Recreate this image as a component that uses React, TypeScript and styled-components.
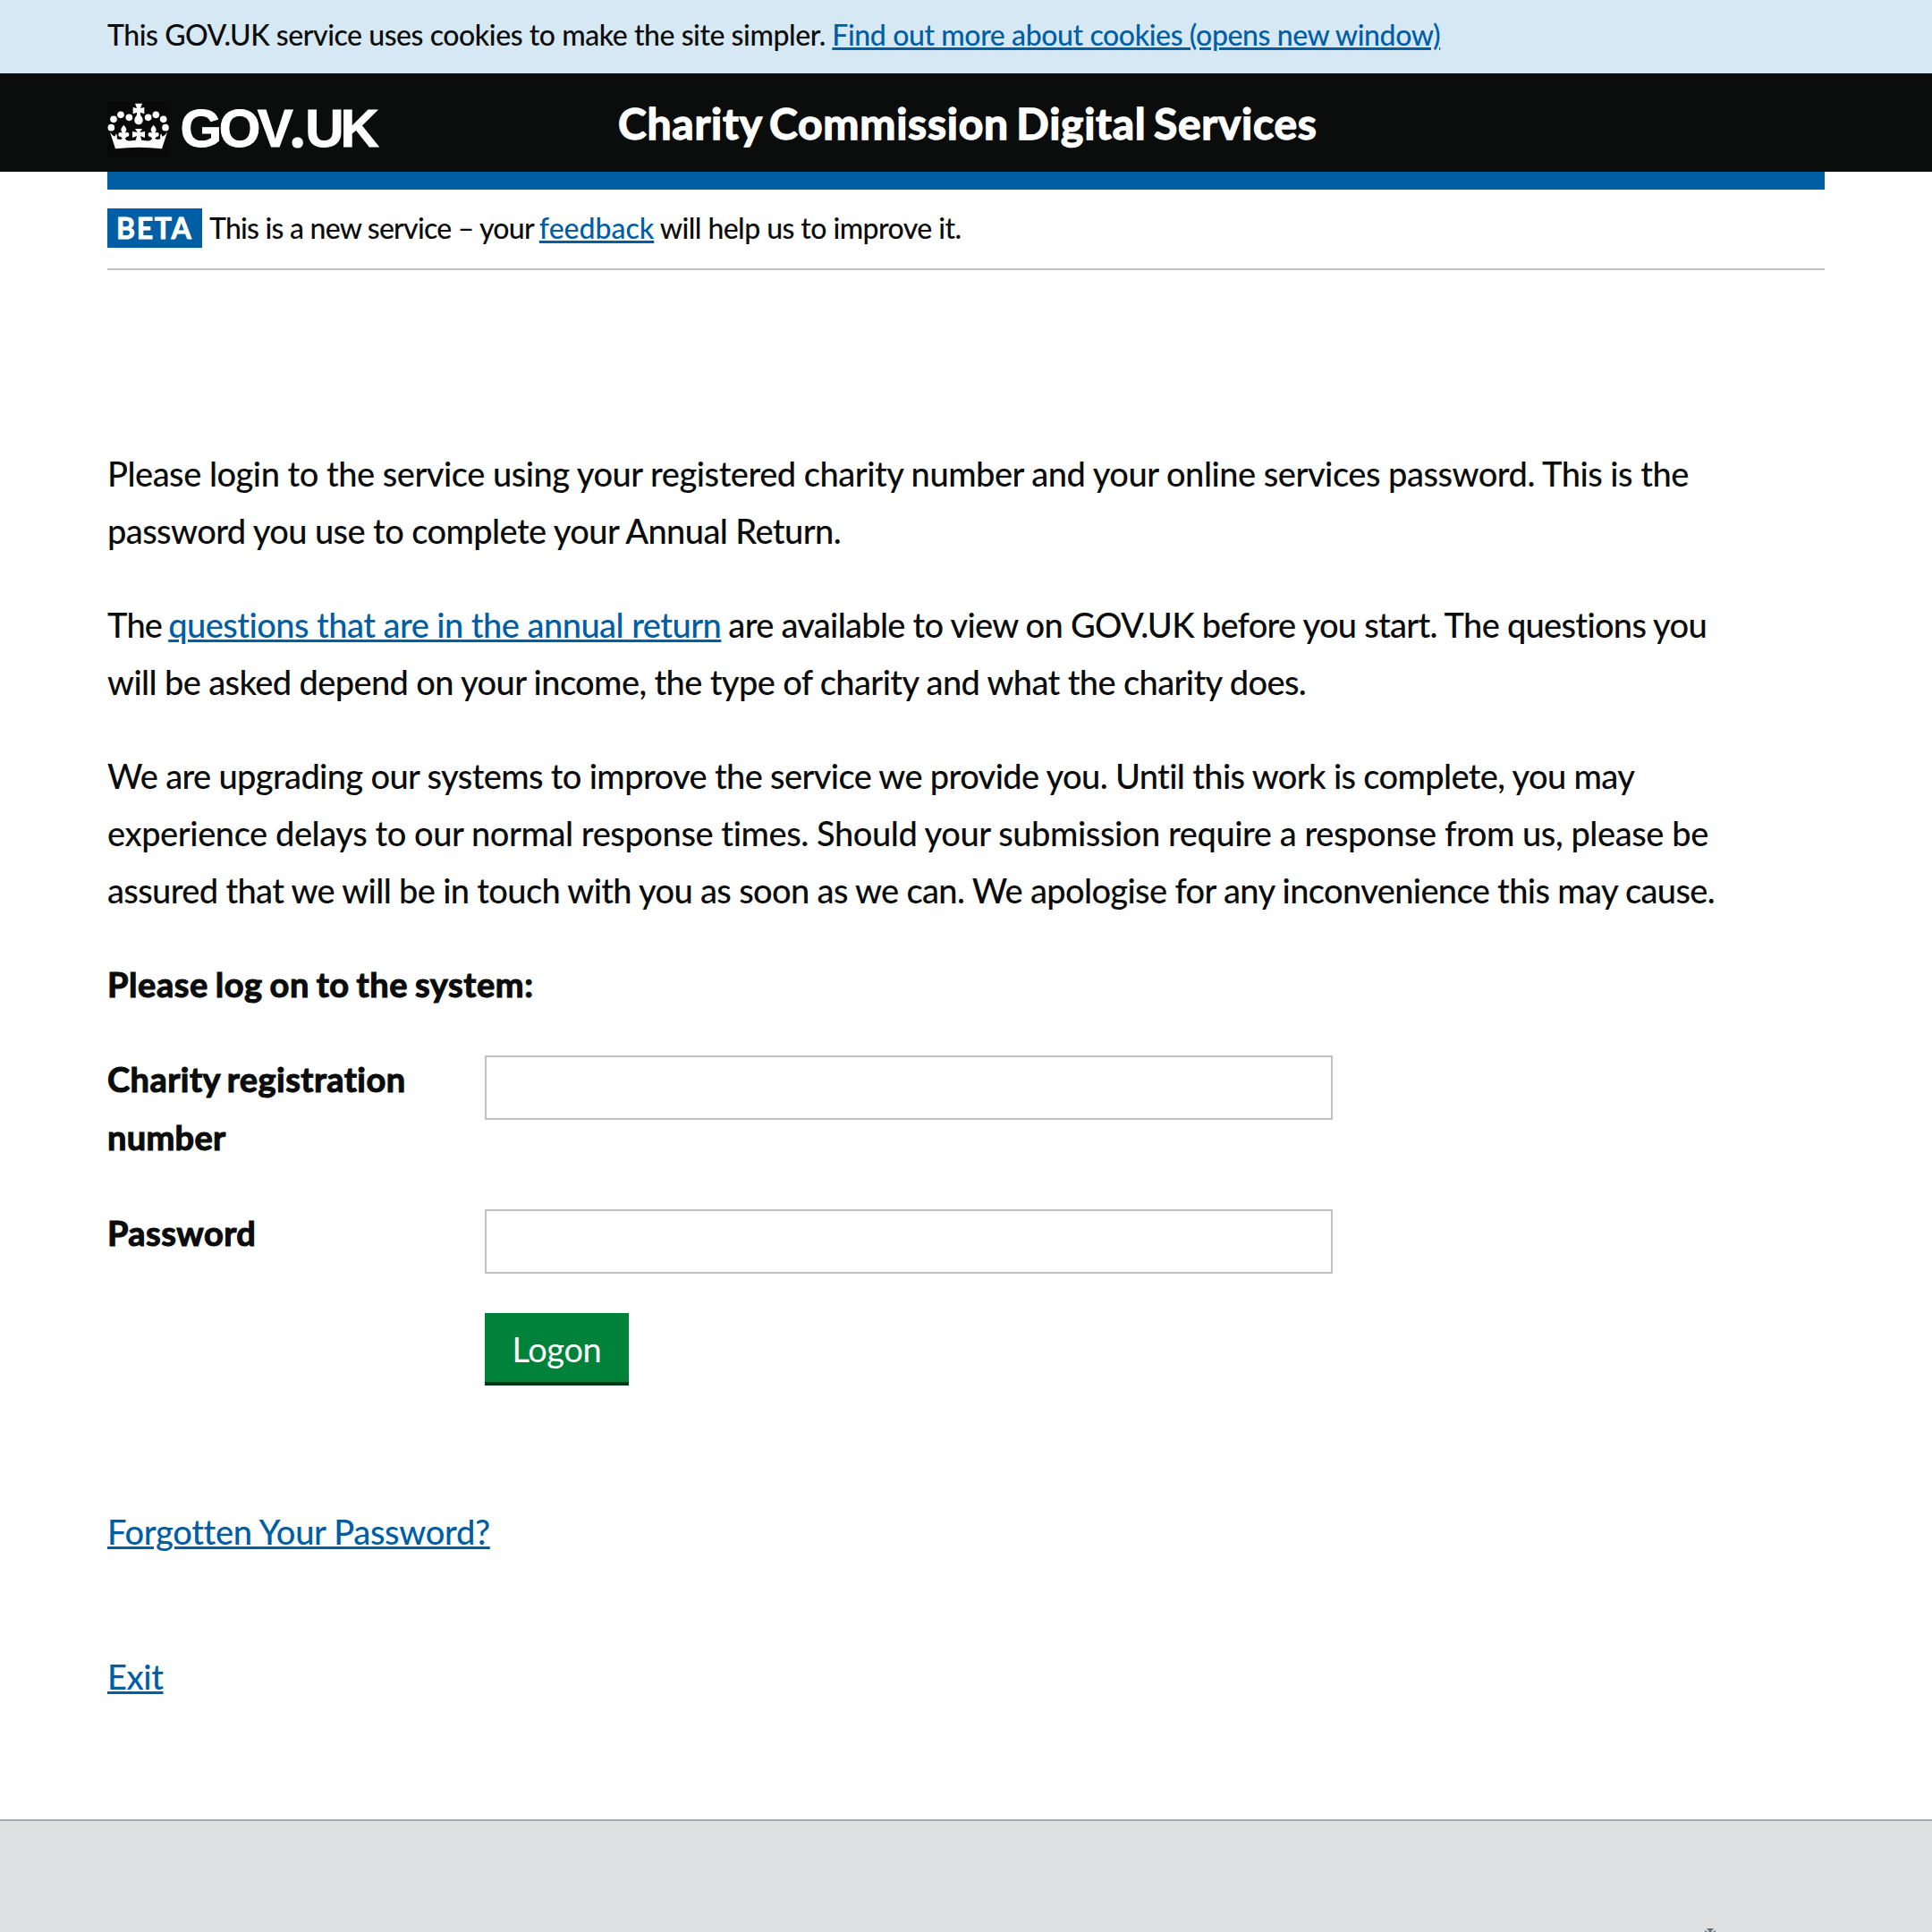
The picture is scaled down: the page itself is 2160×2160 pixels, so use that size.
import React from 'react';
import styled, { createGlobalStyle } from 'styled-components';

const GlobalStyle = createGlobalStyle`
  * { box-sizing: border-box; }
  body { margin: 0; background: #fff; color: #0b0c0c; font-family: Lato, "Noto Sans", sans-serif; font-weight: 500; font-variant-ligatures: none; }
  p, h1, h2 { margin: 0; }
`;
const Page = styled.div`
  display: flex;
  flex-direction: column;
  height: 2160px;
  overflow: hidden;
`;
const Run = styled.span<{ $track: number }>`
  letter-spacing: ${(p) => p.$track}px;
  white-space: nowrap;
`;
const Link = styled.a<{ $track?: number }>`
  color: #005ea5;
  text-decoration: underline;
  text-decoration-thickness: 3px;
  text-underline-offset: 2px;
  white-space: nowrap;
  letter-spacing: ${(p) => p.$track ?? 0}px;
`;
const Gap = styled.span<{ $w: number }>`
  display: inline-block;
  width: ${(p) => p.$w}px;
`;
const CookieBar = styled.div`
  flex: none;
  height: 82px;
  padding: 0 120px;
  background: #d5e8f3;
  font-size: 32px;
  line-height: 77px;
  white-space: nowrap;
`;
const Header = styled.header`
  flex: none;
  display: flex;
  height: 110px;
  padding-left: 116px;
  background: #0b0c0c;
  color: #fff;
`;
const Crown = styled.svg`
  flex: none;
  width: 80px;
  height: 70px;
  margin-top: 26px;
`;
const Wordmark = styled.div`
  flex: none;
  width: 495px;
  padding-left: 5.5px;
  margin-top: 25px;
  font: 700 60px/69px "Liberation Sans", Arial, sans-serif;
  white-space: nowrap;
  -webkit-text-stroke: 0.9px currentColor;
`;
const Stop = styled.span`
  font-family: "Noto Sans", sans-serif;
  -webkit-text-stroke: 2px currentColor;
`;
const ServiceName = styled.h1`
  margin-top: 26px;
  font-size: 48px;
  font-weight: 700;
  line-height: 60px;
  word-spacing: -4px;
  -webkit-text-stroke: 1.4px currentColor;
`;
const Container = styled.div`
  flex: none;
  width: 1920px;
  margin: 0 auto;
`;
const Strip = styled.div`
  height: 20px;
  background: #005ea5;
`;
const PhaseBanner = styled.div`
  display: flex;
  align-items: flex-start;
  height: 90px;
  padding-top: 21px;
  border-bottom: 2px solid #bfc1c3;
`;
const PhaseTag = styled.strong`
  width: 106px;
  height: 44px;
  padding-left: 10px;
  margin-right: 8px;
  background: #005ea5;
  color: #fff;
  font-size: 32px;
  font-weight: 700;
  line-height: 44px;
  -webkit-text-stroke: 0.8px currentColor;
`;
const PhaseText = styled.p`
  font-size: 32px;
  line-height: 44px;
  white-space: nowrap;
`;
const Content = styled.main`
  padding-top: 195px;
  font-size: 38px;
  line-height: 64.4px;
`;
const Paragraph = styled.p`
  margin-bottom: 40px;
`;
const Line = styled.span`
  display: block;
  white-space: nowrap;
`;
const FormTitle = styled.h2`
  font-size: 38px;
  font-weight: 700;
  line-height: 64.4px;
  margin-bottom: 41.8px;
  word-spacing: -2px;
  -webkit-text-stroke: 1.1px currentColor;
`;
const Field = styled.div`
  display: grid;
  grid-template-columns: 422px 948px;
  height: 172px;
`;
const Label = styled.label`
  padding-top: 0.4px;
  font-weight: 700;
  line-height: 65px;
  word-spacing: -2px;
  -webkit-text-stroke: 1.1px currentColor;
`;
const Input = styled.input`
  width: 948px;
  height: 72px;
  margin-top: 6px;
  border: 2px solid #bfc1c3;
  border-radius: 0;
  background: #fff;
  outline: none;
`;
const Button = styled.button`
  display: block;
  width: 161px;
  height: 77px;
  margin: -50px 0 135px 422px;
  padding: 2px 0 0;
  border: 0;
  background: #00823b;
  box-shadow: 0 4px 0 #003618;
  color: #fff;
  font: 400 38px/76px Lato, "Noto Sans", sans-serif;
  letter-spacing: -0.4px;
`;
const Action = styled.p<{ $after: number }>`
  line-height: 64px;
  margin-bottom: ${(p) => p.$after}px;
`;
const Footer = styled.footer`
  flex: none;
  display: flex;
  justify-content: flex-end;
  height: 126px;
  padding: 120px 240px 0 0;
  border-top: 2px solid #a1acb2;
  background: #dee0e2;
`;
const Crest = styled.svg`
  width: 16px;
  height: 4px;
`;

const pearls = [[25, 104], [33, 76], [57, 61], [85, 70], [149, 70], [175, 61], [200, 76], [207, 104]];
const fleurs = [67, 167];

function CrownMark() {
  return (
    <Crown viewBox="0 0 240 210" aria-hidden="true" fill="#fff">
      <rect x="13" y="18" width="208" height="186" fill="#090909" />
      {pearls.map(([x, y]) => <circle key={x} cx={x} cy={y} r="11.5" />)}
      <path d="M105 23h24l-6 16 13-3v22l-14-5 2 11c6 6 7 11 7 16a14 14 0 0 1-28 0c0-5 1-10 7-16l2-11-14 5v-22l13 3z" />
      {fleurs.map((x) => (
        <path key={x} transform={`translate(${x} 0)`} d="M0 95c5 6 9 11 9 16s-3 7-4 11c5-3 12-2 13 4c1 6-4 10-9 8c2 3-3 4-4 4l3 13h-16l3-13c-1 0-6-1-4-4c-5 2-10-2-9-8c1-6 8-7 13-4c-1-4-4-6-4-11s4-10 9-16z" />
      ))}
      <path d="M105 108h24l-8 12 17-3v21l-15-6 5 19h-22l5-19-15 6v-21l17 3z" />
      <path d="M21 119q8 12 16 15l5-10q5 9 2 17q8 5 17 1l12 2q8 6 19 4q12-2 14-2h22q2 0 14 2q11 2 19-4l12-2q9 4 17-1q-3-8 2-17l5 10q8-3 16-15l-18 56q-77-9-156 0z" />
    </Crown>
  );
}

export default function App() {
  return (
    <Page>
      <GlobalStyle />
      <CookieBar>
        <Run $track={-0.45}>This GOV.UK service uses cookies to make the site simpler.</Run><Gap $w={7.6} />
        <Link href="#" $track={-0.4}>Find out more about cookies (opens new window)</Link>
      </CookieBar>
      <Header>
        <CrownMark />
        <Wordmark><Run $track={-3.5}>GOV</Run><Stop>.</Stop><Run $track={-4}>UK</Run></Wordmark>
        <ServiceName><Run $track={0.75}>Charity Commission Digital Services</Run></ServiceName>
      </Header>
      <Container>
        <Strip />
        <PhaseBanner>
          <PhaseTag><Run $track={1.7}>BETA</Run></PhaseTag>
          <PhaseText>
            <Run $track={-0.77}>This is a new service – your</Run><Gap $w={6} />
            <Link href="#">feedback</Link><Gap $w={6.5} />
            <Run $track={-0.56}>will help us to improve it.</Run>
          </PhaseText>
        </PhaseBanner>
        <Content>
          <Paragraph>
            <Line><Run $track={-0.484}>Please login to the service using your registered charity number and your online services password. This is the</Run></Line>
            <Line><Run $track={-0.585}>password you use to complete your Annual Return.</Run></Line>
          </Paragraph>
          <Paragraph>
            <Line>
              <Run $track={-0.8}>The</Run><Gap $w={7} /><Link href="#" $track={-0.53}>questions that are in the annual return</Link><Gap $w={8} />
              <Run $track={-0.71}>are available to view on GOV.UK before you start. The questions you</Run>
            </Line>
            <Line><Run $track={-0.62}>will be asked depend on your income, the type of charity and what the charity does.</Run></Line>
          </Paragraph>
          <Paragraph>
            <Line><Run $track={-0.634}>We are upgrading our systems to improve the service we provide you. Until this work is complete, you may</Run></Line>
            <Line><Run $track={-0.425}>experience delays to our normal response times. Should your submission require a response from us, please be</Run></Line>
            <Line><Run $track={-0.642}>assured that we will be in touch with you as soon as we can. We apologise for any inconvenience this may cause.</Run></Line>
          </Paragraph>
          <FormTitle><Run $track={0.58}>Please log on to the system:</Run></FormTitle>
          <Field>
            <Label htmlFor="charity"><Run $track={0.45}>Charity registration</Run><br /><Run $track={0.3}>number</Run></Label>
            <Input id="charity" />
          </Field>
          <Field>
            <Label htmlFor="password"><Run $track={0.42}>Password</Run></Label>
            <Input id="password" type="password" />
          </Field>
          <Button type="button">Logon</Button>
          <Action $after={98}><Link href="#" $track={-0.32}>Forgotten Your Password?</Link></Action>
          <Action $after={128}><Link href="#" $track={-0.4}>Exit</Link></Action>
        </Content>
      </Container>
      <Footer>
        <Crest viewBox="0 0 16 4" fill="#6b7478"><path d="M4 0h8l-3 4H7zM2 2l3 2H2zM14 2l-3 2h3z" /></Crest>
      </Footer>
    </Page>
  );
}
